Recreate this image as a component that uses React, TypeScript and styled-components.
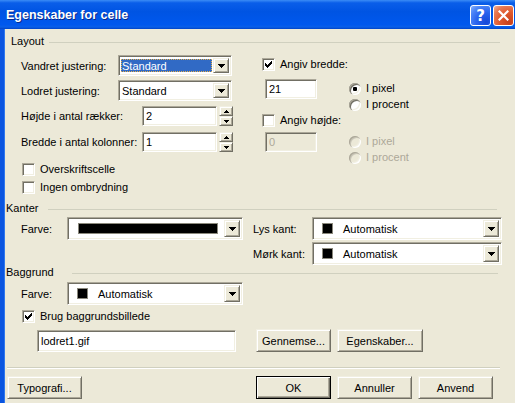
import React from "react";
import styled, { createGlobalStyle, css } from "styled-components";

const FACE = "#ECE9D8";
const LIGHT = "#F1EFE2";
const SHADOW = "#ACA899";
const DARK = "#716F64";
const BODY_X = 4;

const GlobalStyle = createGlobalStyle`
  * { box-sizing: border-box; }
  html, body { margin: 0; padding: 0; background: ${FACE}; }
  body { font-family: "Liberation Sans", Arial, sans-serif; font-size: 11px; color: #000; }
`;

const sunken = css`
  border: 1px solid;
  border-color: ${SHADOW} #fff #fff ${SHADOW};
  box-shadow: inset 1px 1px 0 ${DARK}, inset -1px -1px 0 ${LIGHT};
`;

const raised = css`
  border: 1px solid;
  border-color: ${LIGHT} ${DARK} ${DARK} ${LIGHT};
  box-shadow: inset 1px 1px 0 #fff, inset -1px -1px 0 ${SHADOW};
`;

const pix = (rows: string[]) =>
  rows
    .flatMap((r, y) => [...r].map((c, x) => (c === "X" ? `M${x} ${y}h1v1h-1z` : "")))
    .join("");

const PixIcon = ({ rows, color = "#000" }: { rows: string[]; color?: string }) => (
  <svg width={rows[0].length} height={rows.length} shapeRendering="crispEdges" style={{ display: "block" }}>
    <path d={pix(rows)} fill={color} />
  </svg>
);

const ARROW_DOWN = ["XXXXXXX", ".XXXXX.", "..XXX..", "...X..."];
const SPIN_UP = ["..X..", ".XXX.", "XXXXX"];
const SPIN_DOWN = ["XXXXX", ".XXX.", "..X.."];
const CHECK = ["......X", ".....XX", "X...XXX", "XX.XXX.", "XXXXX..", ".XXX...", "..X...."];

/* ---------- window frame ---------- */

const Window = styled.div`
  width: 515px;
  height: 403px;
  display: flex;
  flex-direction: column;
  overflow: hidden;
`;

const TitleBar = styled.div`
  height: 29px;
  flex: none;
  display: flex;
  align-items: center;
  padding: 0 1px 0 6px;
  background: linear-gradient(
    180deg,
    #3b8cf6 0%,
    #0a5ee9 10%,
    #0054e3 40%,
    #0058ee 85%,
    #0a5fe8 93%,
    #0043c8 100%
  );
`;

const TitleText = styled.div`
  flex: 1;
  color: #fff;
  font-family: "Liberation Sans", Arial, sans-serif;
  font-weight: bold;
  font-size: 12.5px;
  text-shadow: 1px 1px 0 #0a2a8a;
  white-space: nowrap;
  padding-top: 1px;
`;

const CaptionButtons = styled.div`
  display: flex;
  gap: 2px;
  align-self: flex-start;
  margin-top: 5px;
`;

const CaptionButton = styled.div<{ $variant: "help" | "close" }>`
  width: 21px;
  height: 21px;
  border: 1px solid #fff;
  border-radius: 3px;
  display: flex;
  align-items: center;
  justify-content: center;
  color: #fff;
  font-family: "DejaVu Sans", sans-serif;
  font-weight: bold;
  font-size: 15px;
  background: ${(p) =>
    p.$variant === "close"
      ? "radial-gradient(circle at 80% 85%, #c8401a 0%, #e05a2e 45%, #e77a55 75%, #f3b49a 100%)"
      : "radial-gradient(circle at 80% 85%, #1648d8 0%, #2a64ee 45%, #4d86f7 75%, #8ab4fb 100%)"};
`;

const Body = styled.div`
  flex: 1;
  display: flex;
  flex-direction: column;
  background: ${FACE};
  border-left: 4px solid #0a55e0;
  box-shadow: inset 1px 0 0 #2f78ef;
  padding-top: 6px;
`;

/* ---------- group headers ---------- */

const GroupHeader = styled.div<{ $indent: number; $end: number; $top?: number }>`
  display: flex;
  align-items: center;
  height: 13px;
  margin-top: ${(p) => p.$top ?? 0}px;
  padding-left: ${(p) => p.$indent}px;
  padding-right: ${(p) => 515 - p.$end}px;
`;

const GroupLabel = styled.span<{ $w: number }>`
  width: ${(p) => p.$w}px;
  flex: none;
  line-height: 13px;
  white-space: nowrap;
`;

const GroupLine = styled.div`
  flex: 1;
  height: 0;
  margin-top: 1px;
  border-top: 1px solid #d0d0bf;
`;

/* ---------- generic controls ---------- */

const Row = styled.div<{ $top?: number; $left?: number }>`
  display: flex;
  align-items: center;
  margin-top: ${(p) => p.$top ?? 0}px;
  margin-left: ${(p) => p.$left ?? 0}px;
`;

const FieldLabel = styled.span<{ $w: number; $pad?: number }>`
  width: ${(p) => p.$w}px;
  padding-left: ${(p) => p.$pad ?? 0}px;
  flex: none;
  white-space: nowrap;
`;

const ComboBox = styled.div<{ $w: number; $h: number }>`
  width: ${(p) => p.$w}px;
  height: ${(p) => p.$h}px;
  flex: none;
  display: flex;
  background: #fff;
  padding: 2px;
  ${sunken};
`;

const ComboValue = styled.div<{ $selected?: boolean }>`
  flex: 1;
  display: flex;
  align-items: center;
  padding-left: 1px;
  margin: 1px 1px 1px 0;
  white-space: nowrap;
  ${(p) =>
    p.$selected &&
    css`
      background: #316ac5;
      color: #fff;
      outline: 1px dotted #e8b04a;
      outline-offset: -1px;
    `}
`;

const DropButton = styled.div`
  width: 16px;
  flex: none;
  display: flex;
  align-items: center;
  justify-content: center;
  background: ${FACE};
  ${raised};
`;

const Swatch = styled.span<{ $w: number; $gap: number; $left: number }>`
  width: ${(p) => p.$w}px;
  height: 11px;
  flex: none;
  margin-left: ${(p) => p.$left}px;
  margin-right: ${(p) => p.$gap}px;
  background: #000;
  border: 1px solid #8a887c;
`;

const TextField = styled.div<{ $w: number; $h: number; $disabled?: boolean; $left?: number }>`
  width: ${(p) => p.$w}px;
  height: ${(p) => p.$h}px;
  flex: none;
  margin-left: ${(p) => p.$left ?? 0}px;
  display: flex;
  align-items: center;
  padding-left: 3px;
  background: ${(p) => (p.$disabled ? FACE : "#fff")};
  color: ${(p) => (p.$disabled ? SHADOW : "#000")};
  ${sunken};
`;

const Spinner = styled.div`
  width: 14px;
  height: 20px;
  margin-left: 2px;
  flex: none;
  display: flex;
  flex-direction: column;
`;

const SpinButton = styled.div`
  flex: 1;
  display: flex;
  align-items: center;
  justify-content: center;
  background: ${FACE};
  ${raised};
`;

const CheckRow = styled.div<{ $top?: number; $left?: number }>`
  display: flex;
  align-items: center;
  height: 13px;
  margin-top: ${(p) => p.$top ?? 0}px;
  margin-left: ${(p) => p.$left ?? 0}px;
`;

const CheckBox = styled.span`
  width: 13px;
  height: 13px;
  flex: none;
  display: flex;
  align-items: center;
  justify-content: center;
  background: #fff;
  ${sunken};
`;

const Radio = styled.span<{ $checked?: boolean; $disabled?: boolean }>`
  width: 12px;
  height: 12px;
  flex: none;
  border-radius: 50%;
  position: relative;
  background: ${(p) => (p.$disabled ? FACE : "#fff")};
  box-shadow: ${(p) =>
    p.$disabled
      ? `inset 1px 1px 0 ${SHADOW}, inset 2px 2px 0 #c9c6b8, inset -1px -1px 0 #fff, inset -2px -2px 0 ${LIGHT}`
      : `inset 1px 1px 0 ${SHADOW}, inset 2px 2px 0 ${DARK}, inset -1px -1px 0 #fff, inset -2px -2px 0 ${LIGHT}`};
  &::after {
    content: "";
    display: ${(p) => (p.$checked ? "block" : "none")};
    position: absolute;
    left: 4px;
    top: 4px;
    width: 4px;
    height: 4px;
    border-radius: 1px;
    background: #000;
  }
`;

const OptionText = styled.span<{ $gap: number; $disabled?: boolean }>`
  margin-left: ${(p) => p.$gap}px;
  line-height: 13px;
  white-space: nowrap;
  color: ${(p) => (p.$disabled ? SHADOW : "#000")};
`;

const Button = styled.div<{ $w: number; $default?: boolean; $left?: number }>`
  width: ${(p) => p.$w}px;
  height: 23px;
  flex: none;
  margin-left: ${(p) => p.$left ?? 0}px;
  display: flex;
  align-items: center;
  justify-content: center;
  background: ${FACE};
  white-space: nowrap;
  ${(p) =>
    p.$default
      ? css`
          border: 1px solid #000;
          box-shadow: inset 1px 1px 0 #fff, inset -1px -1px 0 ${DARK}, inset -2px -2px 0 ${SHADOW};
        `
      : raised};
`;

/* ---------- sections ---------- */

const LayoutSection = styled.div`
  display: flex;
  padding-left: ${21 - BODY_X}px;
`;

const LeftColumn = styled.div`
  width: 212px;
  display: flex;
  flex-direction: column;
`;

const RightColumn = styled.div`
  margin-left: 29px;
  display: flex;
  flex-direction: column;
`;

const SizeBlock = styled.div<{ $top: number }>`
  display: flex;
  align-items: flex-start;
  margin-top: ${(p) => p.$top}px;
`;

const RadioStack = styled.div`
  display: flex;
  flex-direction: column;
  gap: 3px;
  margin-left: 32px;
  margin-top: 3px;
`;

const KanterGrid = styled.div`
  display: grid;
  grid-template-columns: 46px 176px 69px 190px;
  grid-template-rows: 23px 23px;
  row-gap: 2px;
  align-items: center;
  margin-top: 2px;
  padding-left: ${21 - BODY_X}px;
`;

const BaggrundSection = styled.div`
  display: flex;
  flex-direction: column;
  padding-left: ${21 - BODY_X}px;
`;

const Separator = styled.div`
  margin: 15px ${515 - 500}px 0 ${7 - BODY_X}px;
  border-top: 1px solid #d0d0bf;
  border-bottom: 1px solid #fff;
`;

const Footer = styled.div`
  display: flex;
  margin-top: 7px;
  padding-left: ${7 - BODY_X}px;
`;

/* ---------- composites ---------- */

const Combo = ({
  w,
  h,
  children,
  selected,
}: {
  w: number;
  h: number;
  children: React.ReactNode;
  selected?: boolean;
}) => (
  <ComboBox $w={w} $h={h}>
    <ComboValue $selected={selected}>{children}</ComboValue>
    <DropButton>
      <PixIcon rows={ARROW_DOWN} />
    </DropButton>
  </ComboBox>
);

const Check = ({ checked, label, top, left }: { checked?: boolean; label: string; top?: number; left?: number }) => (
  <CheckRow $top={top} $left={left}>
    <CheckBox>{checked && <PixIcon rows={CHECK} />}</CheckBox>
    <OptionText $gap={5}>{label}</OptionText>
  </CheckRow>
);

const RadioOption = ({ checked, disabled, label }: { checked?: boolean; disabled?: boolean; label: string }) => (
  <CheckRow>
    <Radio $checked={checked} $disabled={disabled} />
    <OptionText $gap={5} $disabled={disabled}>
      {label}
    </OptionText>
  </CheckRow>
);

const SpinField = ({ value }: { value: string }) => (
  <>
    <TextField $w={75} $h={20}>
      {value}
    </TextField>
    <Spinner>
      <SpinButton>
        <PixIcon rows={SPIN_UP} />
      </SpinButton>
      <SpinButton>
        <PixIcon rows={SPIN_DOWN} />
      </SpinButton>
    </Spinner>
  </>
);

export default function App() {
  return (
    <>
      <GlobalStyle />
      <Window>
        <TitleBar>
          <TitleText>Egenskaber for celle</TitleText>
          <CaptionButtons>
            <CaptionButton $variant="help">?</CaptionButton>
            <CaptionButton $variant="close">
              <svg width="11" height="11" viewBox="0 0 11 11">
                <path d="M1.5 1.5L9.5 9.5M9.5 1.5L1.5 9.5" stroke="#fff" strokeWidth="2.2" strokeLinecap="square" />
              </svg>
            </CaptionButton>
          </CaptionButtons>
        </TitleBar>

        <Body>
          <GroupHeader $indent={7} $end={500}>
            <GroupLabel $w={38}>Layout</GroupLabel>
            <GroupLine />
          </GroupHeader>

          <LayoutSection>
            <LeftColumn>
              <Row $top={7}>
                <FieldLabel $w={97}>Vandret justering:</FieldLabel>
                <Combo w={114} h={21} selected>
                  Standard
                </Combo>
              </Row>
              <Row $top={4}>
                <FieldLabel $w={97}>Lodret justering:</FieldLabel>
                <Combo w={114} h={21}>
                  Standard
                </Combo>
              </Row>
              <Row $top={5}>
                <FieldLabel $w={121}>Højde i antal rækker:</FieldLabel>
                <SpinField value="2" />
              </Row>
              <Row $top={6}>
                <FieldLabel $w={121}>Bredde i antal kolonner:</FieldLabel>
                <SpinField value="1" />
              </Row>
              <Check label="Overskriftscelle" top={11} left={1} />
              <Check label="Ingen ombrydning" top={5} left={1} />
            </LeftColumn>

            <RightColumn>
              <Check label="Angiv bredde:" checked top={10} />
              <SizeBlock $top={8}>
                <TextField $w={52} $h={20} $left={3}>
                  21
                </TextField>
                <RadioStack>
                  <RadioOption label="I pixel" checked />
                  <RadioOption label="I procent" />
                </RadioStack>
              </SizeBlock>
              <Check label="Angiv højde:" top={3} />
              <SizeBlock $top={5}>
                <TextField $w={52} $h={20} $left={3} $disabled>
                  0
                </TextField>
                <RadioStack>
                  <RadioOption label="I pixel" disabled />
                  <RadioOption label="I procent" disabled />
                </RadioStack>
              </SizeBlock>
            </RightColumn>
          </LayoutSection>

          <GroupHeader $indent={2} $end={497} $top={8}>
            <GroupLabel $w={42}>Kanter</GroupLabel>
            <GroupLine />
          </GroupHeader>

          <KanterGrid>
            <FieldLabel $w={46}>Farve:</FieldLabel>
            <Combo w={176} h={23}>
              <Swatch $w={140} $gap={0} $left={7} />
            </Combo>
            <FieldLabel $w={69} $pad={10}>
              Lys kant:
            </FieldLabel>
            <Combo w={190} h={23}>
              <Swatch $w={11} $gap={10} $left={6} />
              Automatisk
            </Combo>
            <span />
            <span />
            <FieldLabel $w={69} $pad={10}>
              Mørk kant:
            </FieldLabel>
            <Combo w={190} h={23}>
              <Swatch $w={11} $gap={10} $left={6} />
              Automatisk
            </Combo>
          </KanterGrid>

          <GroupHeader $indent={2} $end={498} $top={1}>
            <GroupLabel $w={66}>Baggrund</GroupLabel>
            <GroupLine />
          </GroupHeader>

          <BaggrundSection>
            <Row $top={3}>
              <FieldLabel $w={46}>Farve:</FieldLabel>
              <Combo w={176} h={23}>
                <Swatch $w={11} $gap={10} $left={6} />
                Automatisk
              </Combo>
            </Row>
            <Check label="Brug baggrundsbillede" checked top={5} left={1} />
            <Row $top={6} $left={16}>
              <TextField $w={199} $h={22}>
                lodret1.gif
              </TextField>
              <Button $w={75} $left={20}>
                Gennemse...
              </Button>
              <Button $w={86} $left={6}>
                Egenskaber...
              </Button>
            </Row>
          </BaggrundSection>

          <Separator />

          <Footer>
            <Button $w={75}>Typografi...</Button>
            <Button $w={75} $left={174} $default>
              OK
            </Button>
            <Button $w={75} $left={6}>
              Annuller
            </Button>
            <Button $w={75} $left={6}>
              Anvend
            </Button>
          </Footer>
        </Body>
      </Window>
    </>
  );
}
